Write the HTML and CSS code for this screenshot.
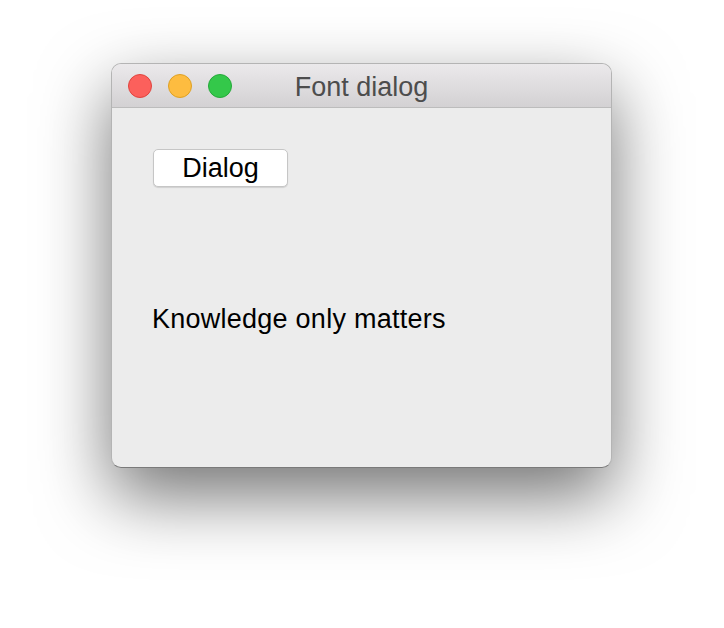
FILE: index.html
```html
<!DOCTYPE html>
<html lang="en">
  <head>
    <meta charset="UTF-8" />
    <title>Font dialog</title>
    <link rel="stylesheet" href="styles.css">
  </head>
  <body>
    <div class="window">
      <div class="titlebar">
        <div class="lights">
          <span class="light close"></span>
          <span class="light minimize"></span>
          <span class="light zoom"></span>
        </div>
        <div class="title">Font dialog</div>
        <div></div>
      </div>
      <div class="content">
        <button class="dialog-btn">Dialog</button>
        <p class="sample">Knowledge only matters</p>
      </div>
    </div>
  </body>
</html>
```

FILE: styles.css
```css
body {
  margin: 0;
  min-height: 628px;
  background-color: #fff;
  font-family: "Liberation Sans", Arial, sans-serif;
}

.window {
  width: 499px;
  height: 403px;
  margin: 63px 0 0 111px;
  border: 1px solid #b4b4b4;
  border-bottom-color: #7a7a7a;
  border-radius: 10px;
  background-color: #ececec;
  box-shadow: 0 28px 70px rgba(0, 0, 0, 0.55);
  overflow: hidden;
  display: flex;
  flex-direction: column;
}

.titlebar {
  height: 43px;
  border-bottom: 1px solid #bcbcbc;
  background: linear-gradient(#ebe9eb, #d3d1d3);
  display: grid;
  grid-template-columns: 1fr auto 1fr;
  align-items: center;
}

.lights {
  display: flex;
  gap: 16px;
  padding-left: 16px;
}

.light {
  width: 22px;
  height: 22px;
  border-radius: 50%;
  border: 1px solid;
}

.close {
  background-color: #fc605c;
  border-color: #e0443e;
}

.minimize {
  background-color: #fdbc40;
  border-color: #dea123;
}

.zoom {
  background-color: #34c84a;
  border-color: #25a93a;
}

.title {
  font-size: 27px;
  line-height: 32px;
  color: #4d4d4d;
  padding-top: 3px;
}

.content {
  padding: 41px 0 0 40px;
  display: flex;
  flex-direction: column;
  align-items: flex-start;
}

.dialog-btn {
  width: 135px;
  height: 38px;
  margin-left: 1px;
  padding: 0;
  border: 1px solid #c6c6c6;
  border-radius: 5px;
  background-color: #fff;
  box-shadow: 0 1px 1px rgba(0, 0, 0, 0.12);
  font-family: inherit;
  font-size: 27px;
  color: #000;
}

.sample {
  margin: 116px 0 0;
  font-size: 27px;
  line-height: 32px;
  letter-spacing: 0.25px;
  color: #000;
}
```
